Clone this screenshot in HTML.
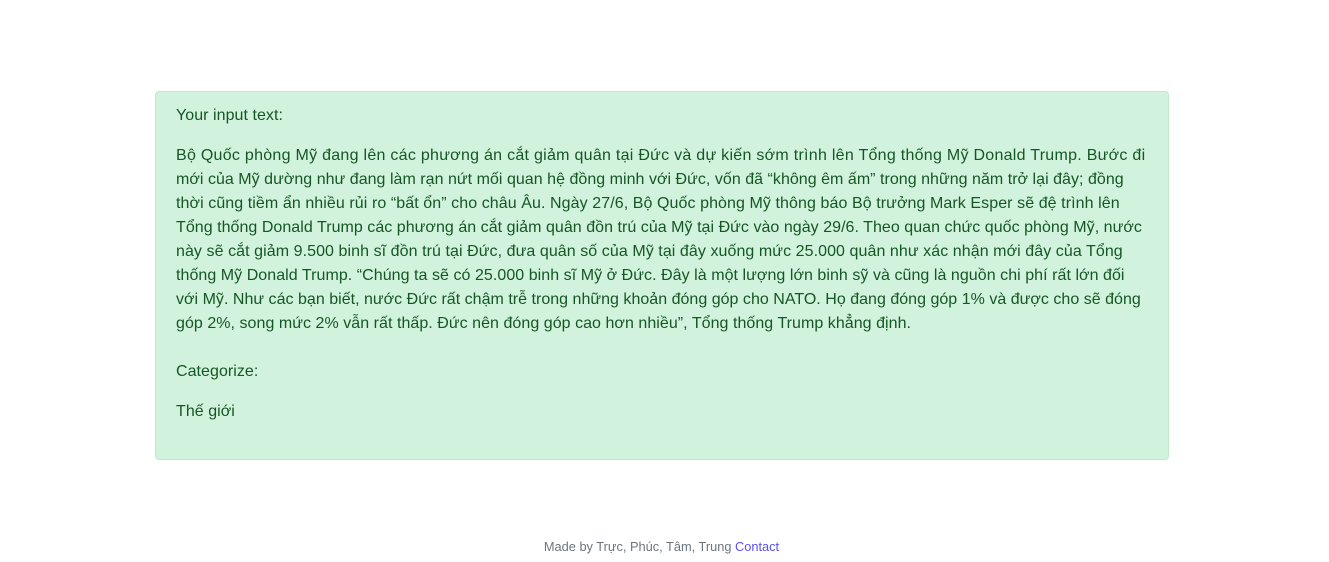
<!DOCTYPE html>
<html><head><meta charset="utf-8"><style>
body{margin:0;background:#fff;font-family:"Liberation Sans",Arial,sans-serif;width:1329px;height:562px;position:relative;overflow:hidden}
.box{position:absolute;left:155px;top:91px;width:972px;height:331px;padding:12px 20px 24px 20px;background:#d1f2dc;border:1px solid #bfe8cd;border-radius:4px;color:#155724;font-size:16px;line-height:24px;letter-spacing:0.05px}
p{margin:0;white-space:nowrap}
p span{display:block}
.foot{position:absolute;top:539px;left:0;width:1323px;text-align:center;font-size:12.8px;color:#6c757d;line-height:16px}
.foot a{color:#5a4ff5;text-decoration:none}
</style></head><body>
<div class="box">
<p>Your input text:</p>
<p style="margin-top:16px"><span style="letter-spacing:0.275px">Bộ Quốc phòng Mỹ đang lên các phương án cắt giảm quân tại Đức và dự kiến sớm trình lên Tổng thống Mỹ Donald Trump. Bước đi</span><span style="letter-spacing:0.03px">mới của Mỹ dường như đang làm rạn nứt mối quan hệ đồng minh với Đức, vốn đã “không êm ấm” trong những năm trở lại đây; đồng</span><span style="letter-spacing:0.08px">thời cũng tiềm ẩn nhiều rủi ro “bất ổn” cho châu Âu. Ngày 27/6, Bộ Quốc phòng Mỹ thông báo Bộ trưởng Mark Esper sẽ đệ trình lên</span><span style="letter-spacing:0.04px">Tổng thống Donald Trump các phương án cắt giảm quân đồn trú của Mỹ tại Đức vào ngày 29/6. Theo quan chức quốc phòng Mỹ, nước</span><span style="letter-spacing:0.07px">này sẽ cắt giảm 9.500 binh sĩ đồn trú tại Đức, đưa quân số của Mỹ tại đây xuống mức 25.000 quân như xác nhận mới đây của Tổng</span><span style="letter-spacing:0.05px">thống Mỹ Donald Trump. “Chúng ta sẽ có 25.000 binh sĩ Mỹ ở Đức. Đây là một lượng lớn binh sỹ và cũng là nguồn chi phí rất lớn đối</span><span style="letter-spacing:0.02px">với Mỹ. Như các bạn biết, nước Đức rất chậm trễ trong những khoản đóng góp cho NATO. Họ đang đóng góp 1% và được cho sẽ đóng</span><span style="letter-spacing:0.045px">góp 2%, song mức 2% vẫn rất thấp. Đức nên đóng góp cao hơn nhiều”, Tổng thống Trump khẳng định.</span></p>
<p style="margin-top:24px">Categorize:</p>
<p style="margin-top:16px">Thế giới</p>
</div>
<div class="foot">Made by Trực, Phúc, Tâm, Trung <a>Contact</a></div>
</body></html>
